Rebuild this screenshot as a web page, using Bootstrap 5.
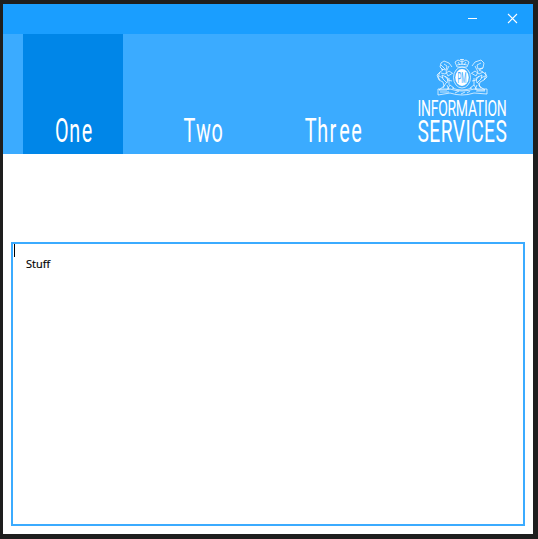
<!DOCTYPE html>
<html lang="en">
<head>
<meta charset="utf-8">
<meta name="viewport" content="width=device-width, initial-scale=1">
<title>Information Services</title>
<link href="https://cdn.jsdelivr.net/npm/bootstrap@5.3.0/dist/css/bootstrap.min.css" rel="stylesheet">
<style>
body{background:#1e1e1e;height:539px;padding:4px 5px 5px 3px;overflow:hidden;font-family:"Open Sans","Noto Sans",sans-serif}
.app-window{width:530px;height:530px}
.title-bar{height:30px;background:#1a9eff;padding-right:13px;gap:25px}
.ribbon{height:120px;background:#3babff;padding-left:20px}
.tab{width:100px;height:120px;border:0;border-radius:0;padding:0;margin-right:23px}
.tab.active{background:#0086e8}
.tab svg,.brand svg{display:block}
.brand{width:110px;margin-left:15px}
svg text{font-family:Roboto,sans-serif;fill:#fff}
.editor{margin:88px 8px 8px;height:284px;border:2px solid #3babff}
.caret{width:1px;height:13px;background:#000;margin-left:1px}
.entry{font-size:11px;line-height:13px;color:#000;margin-left:13px;-webkit-text-stroke:.2px #000}
</style>
<script src="https://cdn.jsdelivr.net/npm/bootstrap@5.3.0/dist/js/bootstrap.bundle.min.js"></script>
</head>
<body>
<main class="app-window bg-white d-flex flex-column">
  <header class="title-bar d-flex align-items-center justify-content-end">
    <svg width="15" height="16" viewBox="0 0 15 16" aria-label="Minimize"><path d="M3 7.5h9" stroke="#fff"/></svg>
    <svg width="15" height="16" viewBox="0 0 15 16" aria-label="Close"><path d="M3 3l9 9M12 3l-9 9" stroke="#fff" stroke-width="1.1"/></svg>
  </header>
  <nav class="ribbon d-flex">
    <button class="tab btn active"><svg width="100" height="120"><g transform="translate(0 108) scale(.6 1)"><text font-size="33" x="53.5 77 98">One</text></g></svg></button>
    <button class="tab btn"><svg width="100" height="120"><g transform="translate(0 108) scale(.6 1)"><text font-size="33" x="62.5 83.5 109">Two</text></g></svg></button>
    <button class="tab btn"><svg width="100" height="120"><g transform="translate(0 108) scale(.6 1)"><text font-size="33" x="59.5 80.500 101 117 137">Three</text></g></svg></button>
    <div class="brand"><svg width="110" height="120" viewBox="407 34 110 120">
      <g fill="none" stroke="#fff" stroke-width="1" stroke-opacity=".72" stroke-linejoin="round">
        <path d="M457 67l-2-5 3-2 4 2 4-2 3 2-2 5zM457 65q5-2 10 0M462 59v6M460 59.5h4M458 62l2 3M466 62l-2 3"/>
        <ellipse cx="462" cy="77.500" rx="8.500" ry="10.500"/>
        <path d="M452 67l-3-4-5-2-3 2-1 4 3 3-3 2-3 3 2 5 4 2 1 4-5 4h8l3-5 4 3M444 64l3 2-1 4-5-1M441 73l4 1 4-3 3 2M445 76l3 4 4 1M439 76l4 2M446 83l-3 5M449 66l-3 6 2 4 5-3M440 80l-2-3 2-5M447 85l2 5M442 75l6 3-1 5-4-4zM441 65l4 4M449 78v7"/>
        <path d="M472 66l3-4 6-2 3 3-1 5-4 2 4 2 3 3-2 5-4 2-1 4 6 4h-8l-3-5-4 3M481 63l-4 2 1 4 5-1M483 72l-4 2-4-3-3 2M479 76l-3 4-4 1M485 76l-4 2M478 83l3 5M475 66l3 6-2 4-5-3M484 80l3-3-2-5M477 85l-2 5M482 75l-6 3 1 5 4-4zM474 78v7"/>
        <path d="M438 89h12q12 4 24 0h13v5l-13-1q-12 4-24 0l-12 2zM452 88q10 4 20 0M440 92h9M476 91h9M455 93l4-2M461 94l4-2M467 93l3-2"/>
      </g>
      <ellipse cx="462" cy="77.500" rx="6.700" ry="8.500" fill="#fff"/>
      <g transform="translate(457.500 83) scale(.5 1)"><text font-size="15" style="fill:#3babff" textLength="18" lengthAdjust="spacingAndGlyphs">PM</text></g>
      <g transform="translate(417.500 116) scale(.62 1)"><text font-size="22.500" textLength="144">INFORMATION</text></g>
      <g transform="translate(417.500 142) scale(.6 1)"><text font-size="32" textLength="149">SERVICES</text></g>
    </svg></div>
  </nav>
  <section class="editor">
    <div class="caret"></div>
    <div class="entry">Stuff</div>
  </section>
</main>
</body>
</html>
